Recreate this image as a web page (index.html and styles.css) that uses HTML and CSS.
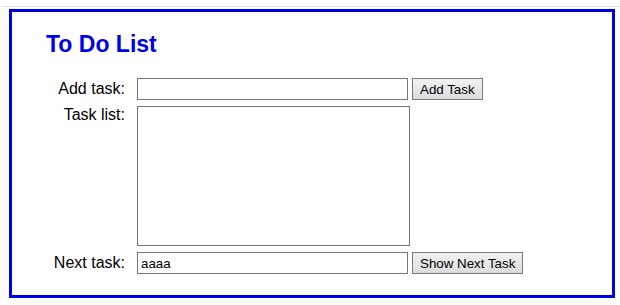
FILE: index.html
```html
<!DOCTYPE html>
<html lang="en">

<head>
  <meta charset="UTF-8" />
  <meta name="viewport" content="width=device-width, initial-scale=1.0" />
  <title>To Do List</title>
  <link rel="stylesheet" href="styles.css">
</head>

<body>
  <div class="frame">
    <div class="todo">
      <h1 class="todo-title">To Do List</h1>
      <div class="todo-form">
        <label class="todo-label" for="task">Add task:</label>
        <div class="todo-field">
          <input type="text" id="task" class="todo-input" />
          <button class="todo-btn">Add Task</button>
        </div>

        <label class="todo-label label-top" for="task_list">Task list:</label>
        <div class="todo-field">
          <textarea id="task_list" class="todo-list"></textarea>
        </div>

        <label class="todo-label" for="next_task">Next task:</label>
        <div class="todo-field">
          <input type="text" id="next_task" class="todo-input" value="aaaa" />
          <button class="todo-btn">Show Next Task</button>
        </div>
      </div>
    </div>
  </div>
</body>

</html>
```

FILE: styles.css
```css
* {
  padding: 0;
  margin: 0;
  box-sizing: border-box;
}

body {
  font-family: "Liberation Sans", Arial, sans-serif;
  font-size: 16px;
  color: #000;
  background-color: #fff;
}

.frame {
  margin: 6px 0 0 2px;
  padding: 2px 0 0 7px;
  border-top: 1px solid #e2e2e2;
}

.todo {
  width: 606px;
  padding: 19px 0 21px 34px;
  border: 3px solid #0000e6;
}

.todo-title {
  font-size: 23px;
  font-weight: bold;
  color: #0000e6;
  margin-bottom: 20px;
}

.todo-form {
  display: grid;
  grid-template-columns: 79px auto;
  column-gap: 12px;
  row-gap: 6px;
  align-items: center;
}

.todo-label {
  text-align: right;
  line-height: 18px;
}

.label-top {
  align-self: start;
}

.todo-field {
  display: flex;
  align-items: center;
  gap: 4px;
}

.todo-input {
  width: 271px;
  height: 22px;
  padding: 1px 3px 0;
  border: 1px solid #767676;
  font-family: "Liberation Sans", Arial, sans-serif;
  font-size: 13.33px;
  color: #000;
}

.todo-list {
  width: 273px;
  height: 140px;
  border: 1px solid #767676;
  resize: none;
}

.todo-btn {
  height: 22px;
  padding: 0 7px;
  border: 1px solid #7a7a7a;
  background: linear-gradient(#f2f2f2, #dcdcdc);
  font-family: "Liberation Sans", Arial, sans-serif;
  font-size: 13.33px;
  color: #000;
}
```
